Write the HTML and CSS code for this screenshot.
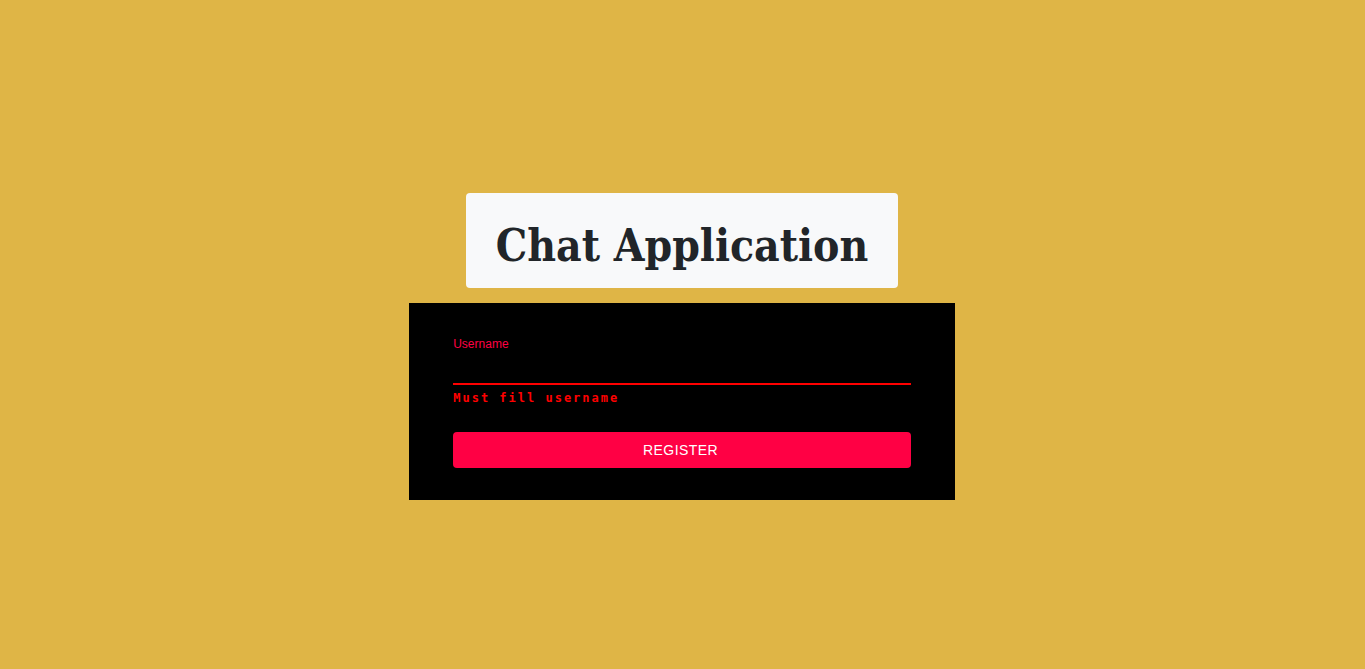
FILE: index.html
```html
<!DOCTYPE html>
<html lang="en">
<head>
<meta charset="utf-8">
<meta name="viewport" content="width=device-width, initial-scale=1">
<title>Chat Application</title>
<link rel="stylesheet" href="styles.css">
</head>
<body>
<main class="page">
  <h1 class="title">Chat Application</h1>
  <form class="card">
    <label class="label" for="username">Username</label>
    <input class="field" id="username" type="text" aria-describedby="username-error" aria-invalid="true">
    <p class="error" id="username-error">Must fill username</p>
    <button class="submit" type="button">REGISTER</button>
  </form>
</main>
</body>
</html>
```
FILE: styles.css
```css
* {
  box-sizing: border-box;
}

body {
  margin: 0;
  background: #dfb546;
  font-family: "Liberation Sans", Arial, sans-serif;
}

.page {
  min-height: 100vh;
  padding: 24px 1px 0 0;
  display: flex;
  flex-direction: column;
  align-items: center;
  justify-content: center;
  gap: 15px;
}

.title {
  margin: 0;
  padding: 23px 30px 12px;
  border-radius: 4px;
  background: #f8f9fa;
  color: #212529;
  font: bold 44px/60px "DejaVu Serif Condensed", "DejaVu Serif", serif;
  white-space: nowrap;
}

.card {
  width: 40%;
  min-width: 320px;
  padding: 33px 44px 32px;
  display: flex;
  flex-direction: column;
  background: #000;
}

.label {
  color: #ff0044;
  font-size: 12px;
  line-height: 16px;
}

.field {
  height: 33px;
  padding: 6px 0;
  border: 0;
  border-bottom: 2px solid #ff0000;
  outline: 0;
  background: transparent;
  color: #ff0044;
  font: 16px "Liberation Sans", Arial, sans-serif;
}

.error {
  margin: 5px 0 26px;
  color: #ff0000;
  font: bold 12px/16px "DejaVu Sans Mono", monospace;
  letter-spacing: 2px;
}

.submit {
  height: 36px;
  padding: 0 19px 0 16px;
  border: 0;
  border-radius: 4px;
  background: #ff0044;
  color: #fff;
  font: 14px/24px "Liberation Sans", Arial, sans-serif;
  letter-spacing: 0.03em;
  cursor: pointer;
}
```
